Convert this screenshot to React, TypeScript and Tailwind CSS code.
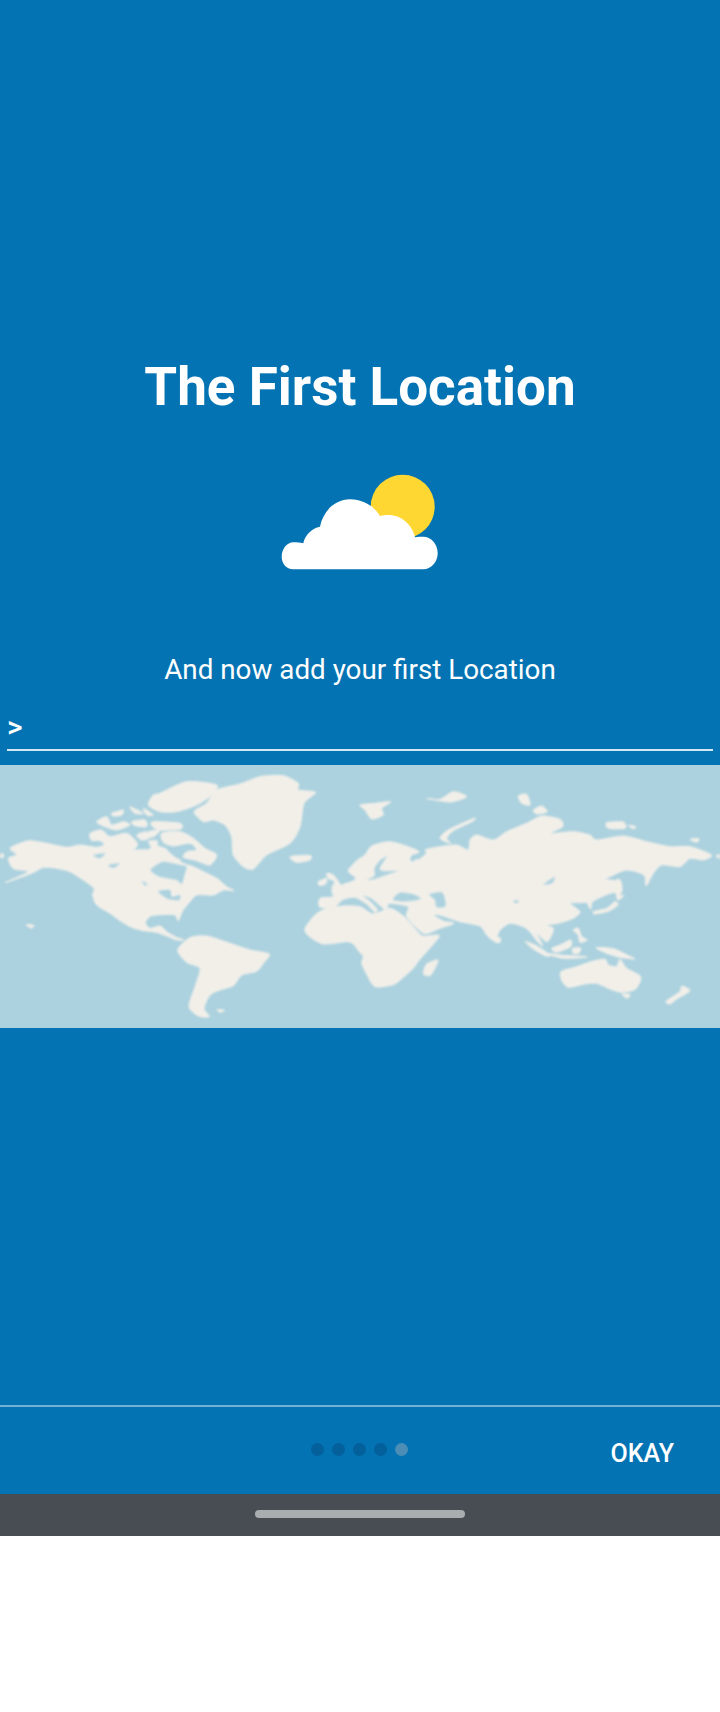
import React from "react";

type Pts = number[];

function smooth(p: Pts, ox = 0, oy = 0) {
  const n = p.length / 2;
  const x = (i: number) => p[((i + n) % n) * 2] + ox;
  const y = (i: number) => p[((i + n) % n) * 2 + 1] + oy;
  const k = 0.12;
  let d = `M${x(0)},${y(0)}`;
  for (let i = 0; i < n; i++) {
    const c1x = x(i) + (x(i + 1) - x(i - 1)) * k;
    const c1y = y(i) + (y(i + 1) - y(i - 1)) * k;
    const c2x = x(i + 1) - (x(i + 2) - x(i)) * k;
    const c2y = y(i + 1) - (y(i + 2) - y(i)) * k;
    d += ` C${c1x},${c1y} ${c2x},${c2y} ${x(i + 1)},${y(i + 1)}`;
  }
  return d + " Z";
}

const LAND: string[] = [
  // North America and Central America
  smooth([30,265,60,250,90,242,140,250,200,262,240,255,290,262,320,255,350,270,410,270,450,268,455,255,495,265,510,280,550,310,580,320,610,335,650,355,680,380,702,392,670,390,640,405,590,405,570,425,548,452,535,482,525,465,490,464,452,468,436,488,450,505,480,498,500,515,525,530,552,540,530,540,510,532,470,517,430,512,395,502,360,482,330,460,290,435,278,405,282,385,250,360,210,335,170,325,130,322,95,340,15,368,85,335,40,326,25,295,50,285]),
  // Arctic (crop coordinates)
  smooth([240,70,320,35,410,45,395,75,350,105,290,125,240,125,205,105,220,75], 240, 30),
  smooth([95,130,130,120,125,135,100,138], 240, 30),
  smooth([150,110,190,130,165,130], 240, 30),
  smooth([190,115,220,135,200,135], 240, 30),
  smooth([50,155,80,140,95,165,130,155,150,165,110,180,70,168], 240, 30),
  smooth([155,155,195,150,200,170,165,167], 240, 30),
  smooth([220,155,300,160,302,177,240,180,215,167], 240, 30),
  smooth([30,190,65,180,90,200,140,190,172,220,160,238,100,242,60,212,35,212], 240, 30),
  smooth([170,195,200,185,207,205,185,210], 240, 30),
  smooth([205,185,240,180,225,197,210,202], 240, 30),
  smooth([245,190,300,185,340,205,375,235,410,255,390,285,350,272,310,262,320,245,350,240,330,220,280,228,250,217], 240, 30),
  smooth([205,215,232,213,225,238], 240, 30),
  smooth([262,265,300,268,282,282], 240, 30),
  // Greenland
  smooth([582,155,620,130,650,90,720,72,780,50,850,47,895,70,895,90,947,97,912,130,900,200,870,250,800,285,760,327,730,320,700,285,695,230,675,195,640,180,610,185]),
  // Iceland
  smooth([870,290,930,286,930,300,890,307]),
  // South America
  smooth([533,570,570,533,620,528,690,550,750,570,808,582,790,610,770,634,725,645,700,677,660,690,630,705,612,745,628,770,595,768,567,740,585,680,600,625,560,607]),
  // Africa
  smooth([915,505,945,465,980,445,1030,438,1080,440,1120,462,1170,445,1210,468,1240,500,1268,528,1318,528,1258,600,1240,625,1210,652,1180,674,1125,680,1100,642,1085,610,1090,590,1078,575,1060,552,1040,545,970,552,925,527]),
  // Eurasia
  smooth([960,415,1000,410,995,390,1025,375,1065,360,1065,342,1080,340,1085,358,1118,360,1162,345,1200,332,1230,318,1245,300,1255,295,1275,270,1320,260,1370,255,1405,270,1410,240,1430,225,1480,240,1520,215,1580,190,1625,168,1680,178,1688,200,1650,220,1720,215,1770,225,1790,240,1870,228,1940,245,2010,260,2070,260,2135,285,2110,300,2070,295,2040,320,1985,315,1960,340,1938,378,1932,345,1880,330,1830,350,1815,358,1855,365,1855,395,1830,400,1785,420,1775,430,1772,448,1760,428,1740,428,1710,430,1740,455,1720,475,1675,490,1640,495,1660,505,1655,525,1640,545,1610,520,1620,540,1628,558,1610,542,1590,515,1570,500,1530,490,1500,510,1490,532,1480,542,1460,525,1440,498,1380,485,1320,465,1300,465,1330,483,1362,490,1320,505,1272,520,1220,470,1225,440,1168,430,1162,445,1150,445,1115,415,1085,405,1110,425,1132,448,1125,457,1100,432,1065,412,1030,418,1005,438,960,442]),
  // Scandinavia
  smooth([145,210,170,182,195,165,215,138,265,125,310,135,358,155,335,165,330,180,345,195,300,210,250,212,240,205,255,180,264,166,240,180,222,205,222,228,190,240,165,230,150,220], 900, 120),
  // Britain and Ireland
  smooth([80,220,100,225,122,258,95,264,105,245,85,235], 900, 120),
  smooth([55,245,80,235,77,252,58,256], 900, 120),
  // Svalbard, Franz Josef, Novaya Zemlya
  smooth([180,15,225,10,272,5,245,25,250,45,215,57,195,30], 900, 120),
  smooth([1280,115,1320,118,1360,95,1400,110,1350,126]),
  smooth([420,115,445,90,522,55,518,64,460,92,440,115,452,130], 900, 120),
  // Severnaya, New Siberian
  smooth([1555,108,1580,103,1590,135,1565,130]),
  smooth([1600,150,1625,138,1642,155,1610,162]),
  smooth([1820,188,1870,186,1875,205,1825,205]),
  smooth([1885,196,1907,200,1900,207]),
  smooth([2070,238,2097,236,2090,247]),
  // Sakhalin, Japan
  smooth([1848,360,1862,362,1866,392,1852,412,1848,395]),
  smooth([340,95,380,85,405,65,414,75,385,94,345,102], 1440, 360),
  smooth([410,50,432,46,416,60], 1440, 360),
  // Sri Lanka, Madagascar
  smooth([1484,533,1500,533,1500,547,1486,547]),
  smooth([1270,642,1280,612,1314,600,1302,630,1290,647]),
  // SE Asia
  smooth([280,150,295,145,305,170,322,180,300,187,295,165], 1440, 360),
  smooth([215,205,240,195,272,180,272,200,240,214,225,216], 1440, 360),
  smooth([136,185,165,195,197,215,212,227,195,227,160,207], 1440, 360),
  smooth([198,220,250,226,322,231,250,235], 1440, 360),
  smooth([278,205,302,204,296,220,280,220], 1440, 360),
  smooth([348,203,400,206,442,225,464,237,420,232,380,220], 1440, 360),
  // Australia, Tasmania, NZ
  smooth([243,275,290,260,340,243,375,238,385,255,410,260,420,238,440,265,482,290,467,327,425,337,390,327,350,310,315,312,265,322,246,302], 1440, 360),
  smooth([426,343,450,343,442,355], 1440, 360),
  smooth([1998,724,2040,695,2045,678,2070,692,2030,717,2010,732]),
  // Tiny islands
  smooth([78,494,102,496,94,504]),
  smooth([2148,288,2162,283,2162,297]),
  smooth([-2,283,10,282,10,292,-2,292]),
  smooth([652,749,674,751,660,757]),
];

const WATER: string[] = [
  // Hudson Bay
  smooth([215,295,250,275,300,285,320,290,315,310,305,342,290,330,240,320,215,305], 240, 30),
  // Great Lakes etc.
  smooth([235,365,270,360,275,380,300,375,297,390,265,387], 240, 30),
  smooth([40,255,75,250,60,265], 240, 30),
  smooth([85,285,120,280,100,294], 240, 30),
  smooth([185,335,200,340,198,348], 240, 30),
  // Black Sea, Caspian, White Sea
  smooth([280,295,300,278,340,283,362,297,320,304,285,302], 900, 120),
  smooth([388,283,427,278,437,318,410,322,405,300], 900, 120),
  smooth([345,170,370,150,378,160,355,178], 900, 120),
  // Lakes in Asia
  smooth([1630,374,1664,350,1656,370]),
  smooth([100,62,118,62,108,70], 1440, 360),
];

function WorldMap() {
  return (
    <div className="h-[263px] w-full overflow-hidden bg-[#acd2df]">
      <svg viewBox="0 15 2160 789" className="block h-[263px] w-[720px] blur-[1px]">
        {LAND.map((d, i) => (
          <path key={i} d={d} fill="#f2efe9" stroke="#f2efe9" strokeWidth="3" />
        ))}
        {WATER.map((d, i) => (
          <path key={i} d={d} fill="#acd2df" />
        ))}
      </svg>
    </div>
  );
}

function Weather() {
  return (
    <svg width="158" height="97" viewBox="0 0 158 97" className="block">
      <circle cx="121.7" cy="32.7" r="32" fill="#fed733" />
      <path
        fill="#ffffff"
        d="M12.3,95.3 C5,95.3 0.7,89 0.7,82.7 C0.7,75 6,68.3 12.3,68.3 C16,68.3 19,68.5 22.3,69.3 C24,61 31,54 39,52.7 C42,37 54,25.3 69,25.3 C82,25.3 93,32 99,42 C102,41 104.5,41 107.3,41 C120,41 131,50 134,63.3 C137,62.7 139.5,62.7 142.3,62.7 C150,62.7 156.7,70 156.7,79.3 C156.7,88 150,95.3 142.3,95.3 Z"
      />
    </svg>
  );
}

export default function App() {
  return (
    <div className="flex h-[1712px] w-[720px] flex-col bg-white font-['Roboto',sans-serif] text-white">
      <div className="flex h-[1494px] flex-col bg-[#0373b3]">
        <h1 className="mt-[354px] text-center text-[53px] font-bold leading-[66px]">The First Location</h1>
        <div className="mt-[54px] flex justify-center">
          <Weather />
        </div>
        <p className="mt-[81px] text-center text-[27.8px] leading-[36px]">And now add your first Location</p>
        <div className="mx-[7px] mt-[21px] h-[42px] border-b-2 border-[#d3e7f3] text-[30px] font-medium leading-[36px]">&gt;</div>
        <div className="mt-[14px]">
          <WorldMap />
        </div>
        <div className="flex-1" />
        <div className="relative flex h-[89px] items-start justify-end border-t-2 border-[#72b0d4] pr-[46px] pt-[32px]">
          <span className="text-[25px] font-medium leading-[30px]">OKAY</span>
          <div className="absolute left-[311px] top-[36px] flex gap-2">
            <span className="h-[13px] w-[13px] rounded-full bg-[#03609a]" />
            <span className="h-[13px] w-[13px] rounded-full bg-[#03609a]" />
            <span className="h-[13px] w-[13px] rounded-full bg-[#03609a]" />
            <span className="h-[13px] w-[13px] rounded-full bg-[#03609a]" />
            <span className="h-[13px] w-[13px] rounded-full bg-[#4c8db5]" />
          </div>
        </div>
      </div>
      <div className="flex h-[42px] justify-center bg-[#474d52] pt-4">
        <div className="h-2 w-[210px] rounded-full bg-[#a9adb0]" />
      </div>
    </div>
  );
}
